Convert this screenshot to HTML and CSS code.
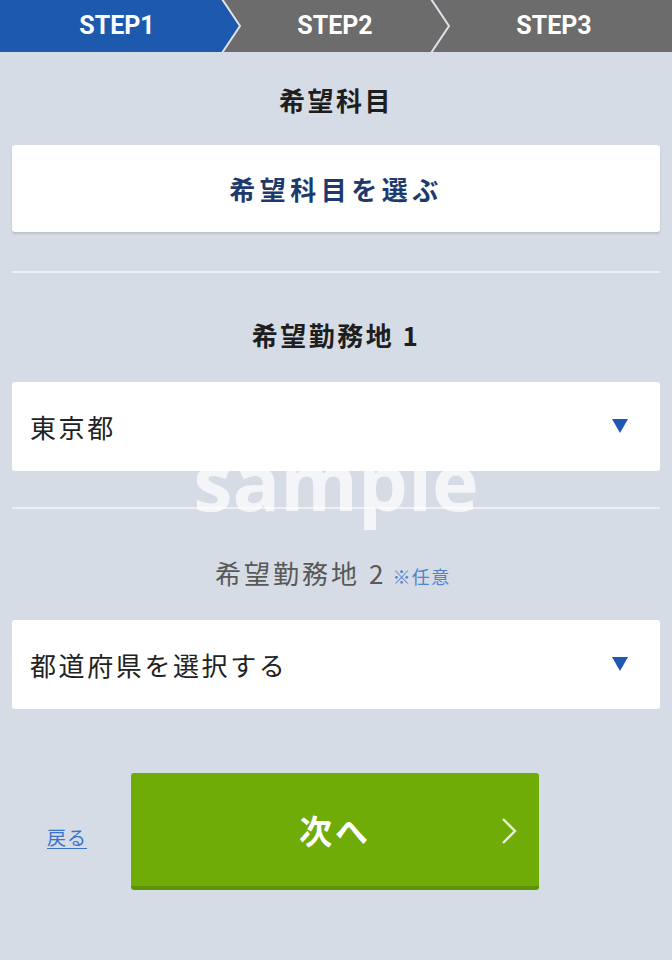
FILE: index.html
```html
<!DOCTYPE html>
<html lang="ja">
<head>
<meta charset="utf-8">
<title>STEP1</title>
<link rel="stylesheet" href="styles.css">
</head>
<body>
<div class="page">
  <nav class="steps">
    <svg class="steps-bg" width="672" height="52" viewBox="0 0 672 52" aria-hidden="true">
      <rect x="0" y="0" width="672" height="52" fill="#6c6c6c"/>
      <polygon points="0,0 222,0 240,26 222,52 0,52" fill="#1d5aae"/>
      <polyline points="222,-1 240,26 222,53" fill="none" stroke="#dfe3ea" stroke-width="2"/>
      <polyline points="431,-1 449,26 431,53" fill="none" stroke="#dfe3ea" stroke-width="2"/>
    </svg>
    <span class="step step-1">STEP1</span>
    <span class="step step-2">STEP2</span>
    <span class="step step-3">STEP3</span>
  </nav>

  <main class="form">
    <h2 class="label label-first">希望科目</h2>
    <button class="choose">希望科目を選ぶ</button>

    <hr class="divider">

    <h2 class="label">希望勤務地 1</h2>
    <div class="select">
      <span class="select-text">東京都</span>
      <svg class="caret" width="16" height="14" viewBox="0 0 16 14" aria-hidden="true"><polygon points="0,0 16,0 8,14" fill="#1f58b4"/></svg>
    </div>

    <hr class="divider">

    <h2 class="label label-optional">希望勤務地 2<span class="optional">※任意</span></h2>
    <div class="select">
      <span class="select-text">都道府県を選択する</span>
      <svg class="caret" width="16" height="14" viewBox="0 0 16 14" aria-hidden="true"><polygon points="0,0 16,0 8,14" fill="#1f58b4"/></svg>
    </div>

    <div class="actions">
      <a class="back" href="#">戻る</a>
      <button class="next">
        <span class="next-text">次へ</span>
        <svg class="next-arrow" width="16" height="28" viewBox="0 0 16 28" aria-hidden="true"><polyline points="2,2 14,14 2,26" fill="none" stroke="#e9f3d8" stroke-width="2.4"/></svg>
      </button>
    </div>
  </main>

  <div class="watermark">sample</div>
</div>
</body>
</html>
```

FILE: styles.css
```css
* { box-sizing: border-box; }

html, body {
  margin: 0;
  padding: 0;
}

body {
  background: #d6dce5;
  font-family: "Noto Sans CJK JP", "Noto Sans", sans-serif;
  color: #222;
  width: 672px;
  height: 960px;
  overflow: hidden;
}

.page {
  position: relative;
  height: 960px;
}

.steps {
  position: relative;
  height: 52px;
  display: flex;
  align-items: center;
}

.steps-bg {
  position: absolute;
  left: 0;
  top: 0;
}

.step {
  position: relative;
  font-family: Roboto, "Liberation Sans", sans-serif;
  font-weight: 700;
  font-size: 25px;
  color: #fff;
  text-align: center;
  line-height: 52px;
}

.step-1 { width: 234px; }
.step-2 { width: 202px; }
.step-3 { width: 236px; }

.form {
  padding: 0 12px;
  display: flex;
  flex-direction: column;
}

.label {
  margin: 42px 0 0;
  height: 40px;
  line-height: 40px;
  font-size: 26px;
  font-weight: 700;
  letter-spacing: 2.5px;
  text-align: center;
  color: #1e1e1e;
}

.label-first { margin-top: 28px; }

.label-optional {
  margin-top: 44px;
  font-weight: 400;
  letter-spacing: 3px;
  color: #585858;
  padding-right: 6px;
}

.optional {
  font-size: 18px;
  letter-spacing: 1.5px;
  color: #4f82cf;
  margin-left: 6px;
}

.choose {
  margin-top: 25px;
  height: 87px;
  border: none;
  border-radius: 3px;
  background: #fff;
  box-shadow: 0 2px 2px rgba(60, 70, 90, 0.18);
  font-family: "Noto Sans CJK JP", sans-serif;
  font-size: 26px;
  font-weight: 700;
  letter-spacing: 4.5px;
  color: #1d3a6c;
  padding: 0;
}

.divider {
  margin: 39px 0 0;
  border: none;
  height: 2px;
  background: #edf0f4;
}

.choose + .divider { margin-top: 39px; }
.select + .divider { margin-top: 36px; }

.select {
  margin-top: 27px;
  height: 89px;
  background: #fff;
  border-radius: 3px;
  display: flex;
  align-items: center;
  justify-content: space-between;
  padding: 0 32px 0 18px;
}

.label-optional + .select { margin-top: 27px; }

.select-text {
  font-size: 26px;
  letter-spacing: 2.6px;
  color: #222;
}

.caret { margin-top: -2px; }

.actions {
  margin-top: 64px;
  display: flex;
  align-items: center;
  padding-left: 35px;
}

.back {
  width: 84px;
  font-size: 19px;
  letter-spacing: 1px;
  color: #3a74c9;
  text-decoration: underline;
  text-underline-offset: 3px;
  margin-top: 10px;
}

.next {
  position: relative;
  width: 408px;
  height: 117px;
  border: none;
  border-radius: 3px;
  background: #6fac07;
  border-bottom: 4px solid #5e9405;
  font-family: "Noto Sans CJK JP", sans-serif;
  font-size: 33px;
  font-weight: 700;
  letter-spacing: 3px;
  color: #fff;
  padding: 0;
  display: flex;
  align-items: center;
  justify-content: center;
}

.next-arrow {
  position: absolute;
  right: 22px;
  top: 44px;
}

.watermark {
  position: absolute;
  left: 0;
  right: 0;
  top: 431px;
  text-align: center;
  font-family: "Open Sans", sans-serif;
  font-weight: 700;
  font-size: 79px;
  line-height: 100px;
  color: rgba(255, 255, 255, 0.72);
  pointer-events: none;
}
```
